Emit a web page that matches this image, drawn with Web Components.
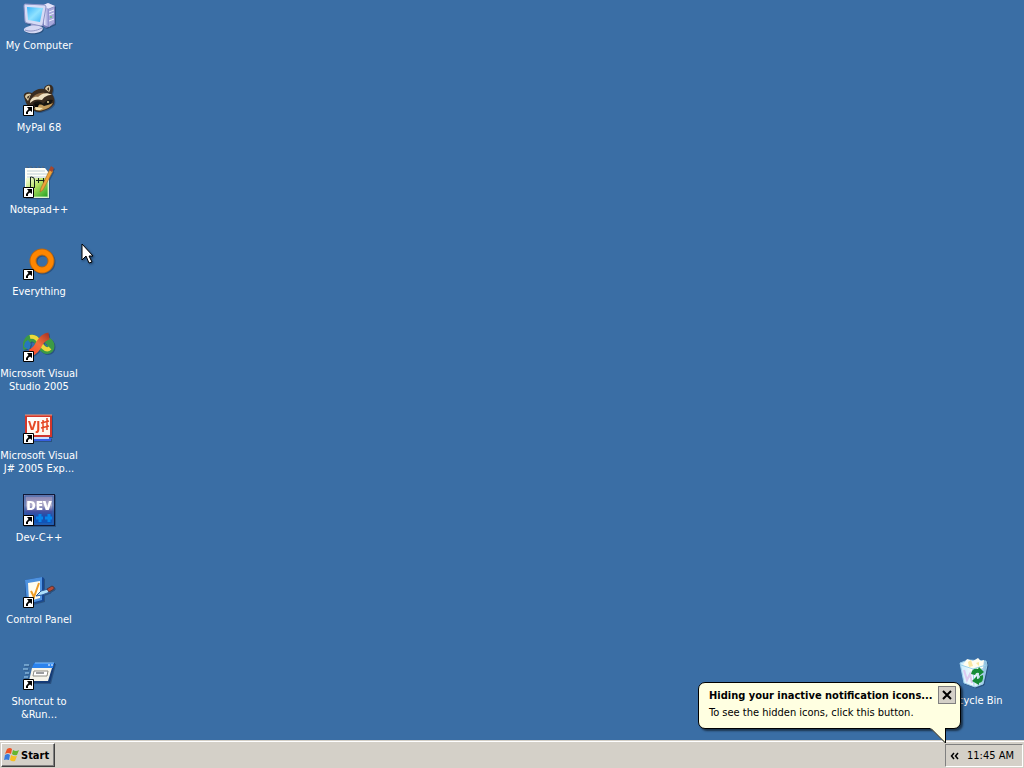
<!DOCTYPE html>
<html lang="en">
<head>
<meta charset="utf-8">
<title>Desktop</title>
<style>
html, body { height: 100%; margin: 0; }
body { font: 11px/13px "DejaVu Sans Condensed", sans-serif; overflow: hidden; background: #3a6ea5; }
</style>
</head>
<body>
<desktop-shell>
  <desktop-icon slot="left" name="computer">My Computer</desktop-icon>
  <desktop-icon slot="left" name="raccoon" shortcut>MyPal 68</desktop-icon>
  <desktop-icon slot="left" name="notepad" shortcut>Notepad++</desktop-icon>
  <desktop-icon slot="left" name="everything" shortcut>Everything</desktop-icon>
  <desktop-icon slot="left" name="studio" shortcut>Microsoft Visual Studio 2005</desktop-icon>
  <desktop-icon slot="left" name="jsharp" shortcut>Microsoft Visual J# 2005 Exp...</desktop-icon>
  <desktop-icon slot="left" name="devcpp" shortcut>Dev-C++</desktop-icon>
  <desktop-icon slot="left" name="control" shortcut>Control Panel</desktop-icon>
  <desktop-icon slot="left" name="run" shortcut>Shortcut to &amp;Run...</desktop-icon>
  <desktop-icon slot="right" name="recycle">Recycle Bin</desktop-icon>
  <mouse-pointer slot="pointer"></mouse-pointer>
  <task-bar slot="taskbar">
    <start-button>Start</start-button>
    <system-tray slot="tray">
      <time slot="clock">11:45 AM</time>
      <tray-balloon slot="balloon">
        <span slot="title">Hiding your inactive notification icons...</span>
        To see the hidden icons, click this button.
      </tray-balloon>
    </system-tray>
  </task-bar>
</desktop-shell>

<script>
const art = {
  computer: `
    <defs><linearGradient id="s" x2="1" y2="1"><stop stop-color="#38b4fa"/><stop offset=".5" stop-color="#8fe2ff"/><stop offset="1" stop-color="#3bb2f6"/></linearGradient>
    <linearGradient id="t"><stop stop-color="#e8eaff"/><stop offset="1" stop-color="#8588ca"/></linearGradient></defs>
    <path d="M18 4 25 1l7 3v18l-9 4-5-3z" fill="#767bb9"/>
    <path d="M18 4 25 1l7 3-7 3z" fill="#e4e5fa"/><path d="M21 5l5 2v18l-5-2z" fill="url(#t)"/><path d="M26 7l5-2v16l-5 4z" fill="#a6a8da"/>
    <path d="M26 10l5-2M26 13l5-2M26 19l5-2" stroke="#eef0ff"/><path d="M27 15h2" stroke="#52d24f"/>
    <path d="M8 22h8l1 5H7z" fill="#9a9fce"/><path d="M1 27c2-3 12-5 18-2 2 2 0 5-6 6S0 30 1 27" fill="#d5d8f3"/><path d="M2 28c5 2 11 1 17-2" stroke="#8f95c5" fill="none"/>
    <path d="M2 2 21 3q2 0 2 2l-3 17q0 2-2 2L4 21q-2 0-2-2L1 4q0-2 1-2" fill="#d6dbf5" stroke="#8c92c6"/>
    <path d="M4 5l16 1-3 14-12-2z" fill="url(#s)"/>`,
  raccoon: `
    <path d="M1 13c-1-3 2-6 8-4 3-3 7-5 12-4 0-3 4-5 7-4 3 2 2 6 1 9 2 3 3 6 2 10-3 4-7 6-11 7-4 2-8 1-11-2-3-2-5-4-6-6z" fill="#3a2c20"/>
    <path d="M2 13c0-3 3-4 6-3l-3 7zM22 5c1-4 5-4 5-2 1 3-1 5-1 5z" fill="#dccba4"/><path d="M4 13l3-2-2 4zM24 5l2-2v4z" fill="#35261b"/>
    <path d="M7 18C9 12 15 8 22 9c-3 2-5 4-6 6-4-1-6 1-9 3z" fill="#8c6a46"/>
    <path d="M7 19c0-4 4-7 8-6 4-4 9-5 14-2-5 0-8 2-10 5-4-1-8-1-12 3z" fill="#eee0c2"/>
    <path d="M10 20c3-4 8-3 10 0 3-4 6-5 10-4-2 4-4 7-8 8l-7 2z" fill="#171511"/>
    <path d="M13 23c2-3 5-3 8-1 4-1 7-2 9-3-2 4-6 6-10 7-3 1-6 1-9-1z" fill="#c19a5b"/>
    <path d="M12 23l8 1-3 2h-4z" fill="#f3e5b8"/><path d="M12 20l4 0-1 3h-3z" fill="#0c0b09"/><circle cx="25" cy="18" r="1" fill="#e9d49b"/>`,
  notepad: `
    <defs><linearGradient id="n" x1="0" y1="0" x2="1" y2="1"><stop stop-color="#fbffe4"/><stop offset=".45" stop-color="#b4e060"/><stop offset="1" stop-color="#1da01f"/></linearGradient></defs>
    <path d="M2 2h20l4 5v25H2z" fill="#fffff8"/><path d="M4 5h18M4 8h20M4 11h20" stroke="#bccdd4"/><path d="M3 1h18" stroke="#566678" stroke-width="1" stroke-dasharray="2 2"/>
    <path d="M3 12h22v19H3z" fill="url(#n)"/><path d="M25 7v25M2 31h23" stroke="#bfe9ac"/>
    <path d="M7.500 22V11h1q3 0 3 3v8M13 14.500h5m-2.500-2.500v5M18 14.500h5m-2.500-2.500v5" stroke="#14231a" fill="none"/>
    <path d="M27 3l3 2-10 19-3 2 1-4z" fill="#eea33c" stroke="#a96a1e" stroke-width=".6"/><path d="M26 4l2-4 3 2-2 4z" fill="#a7472d"/>`,
  everything: `<circle cx="19" cy="13" r="9" fill="none" stroke="#b86712" stroke-width="7"/><circle cx="19" cy="13" r="9" fill="none" stroke="#ff8600" stroke-width="5"/>`,
  studio: `
    <defs><linearGradient id="r" x1="0" y1="1" x2="1" y2="0"><stop stop-color="#ff4a2c"/><stop offset=".5" stop-color="#f0703c"/><stop offset="1" stop-color="#b23a25"/></linearGradient></defs>
    <path d="M4 19C2 13 5 8 9 8c4 0 6 4 9 8 4 6 10 6 10 0 0-3-2-5-5-6" fill="none" stroke="#3c9a45" stroke-width="7"/>
    <path d="M1 17q0-5 4-7l3 4-2 6z" fill="#2876bf"/>
    <path d="M7 7c4-1 7 1 9 5l4 5q4 4 7 1" fill="none" stroke="#ecd93a" stroke-width="4"/>
    <path d="M7 23q6-2 9-9 4-7 10-8" fill="none" stroke="url(#r)" stroke-width="7"/>`,
  jsharp: `
    <defs><linearGradient id="j" y2="1" x2="1"><stop stop-color="#fff"/><stop offset="1" stop-color="#fff3e8"/></linearGradient></defs>
    <path d="M3 26h25v3H10z" fill="#365fe0"/><path d="M10 25h16v2H10z" fill="#c9ddff"/>
    <path d="M2 3h27v22H2z" fill="#d1362c"/><path d="M4 5h23v18H4z" fill="url(#j)"/><path d="M2 3h27" stroke="#f09478"/>
    <text x="5" y="18" font-family="DejaVu Sans Condensed" font-size="12" font-weight="700" fill="#e54825">VJ</text><path d="M20 8v12m4-14v12m-6-7 8-2m-8 7 8-2" stroke="#e54825" stroke-width="1.500"/>`,
  devcpp: `
    <defs><linearGradient id="d" x2="0" y2="1"><stop stop-color="#817dae"/><stop offset=".35" stop-color="#aeabc9"/><stop offset=".55" stop-color="#4350a0"/><stop offset=".7" stop-color="#1b4fae"/><stop offset="1" stop-color="#0957bc"/></linearGradient></defs>
    <rect x=".5" y=".5" width="31" height="31" fill="url(#d)" stroke="#101938"/><path d="M2 2h28v28H2z" fill="none" stroke="#3264aa"/>
    <path d="M13 24h7m-3-4v8M22 24h7m-3-4v8" stroke="#0784e9" stroke-width="3"/>
    <text x="16" y="16" text-anchor="middle" font-family="Open Sans" font-size="13" font-weight="800" fill="#fff">DEV</text>`,
  control: `
    <path d="M2 4 19 1l2 1v23L6 29l-3-2z" fill="#164792"/><path d="M2 4l17-3v23L4 28z" fill="#4e92df"/><path d="M5 7l12-2v17L6 25z" fill="#fffdf1"/>
    <path d="M8 15l3 6 5-14" stroke="#ed9d28" stroke-width="2" fill="none"/>
    <path d="M13 20l5-5 7-2 2 3-8 3z" fill="#aee0fa" stroke="#2c5a9c"/><path d="M24 13l5-3q3 1 2 3l-5 3z" fill="#b74936" stroke="#51383d"/>`,
  run: `
    <path d="M1 7h5M0 11h5M2 15h4M1 19h4" stroke="#a9d8f6"/>
    <path d="M11 5h21l-5 20H6z" fill="#143b77"/><path d="M11 5h20l-1 5H9z" fill="#2b83ed"/><path d="M12 5h19" stroke="#7ec0ff"/><path d="M9 10h20l-4 13H6z" fill="#f5f4ea"/>
    <path d="M11 13h14l-1 5H10z" fill="#fff" stroke="#8c8c83"/><path d="M13 15h8" stroke="#383c40"/><path d="M25 7h2m1 0h2" stroke="#fff"/>`,
  recycle: `
    <defs><linearGradient id="b"><stop stop-color="#c8ebfd"/><stop offset=".5" stop-color="#f7fcff"/><stop offset="1" stop-color="#81b7dc"/></linearGradient></defs>
    <path d="M2 6 10 3l18 1 1 4-4 19-8 3-11-4z" fill="url(#b)" stroke="#9ed0ec"/>
    <path d="M5 8l4-6 6 2 5-3 3 3 3-1-1 8-10 3z" fill="#fffdf1"/><path d="M10 5l3-2 2 6-4 1zM18 6l3-1v4z" fill="#f9e7a2"/>
    <path d="M3 8l12 4 13-4M15 12l1 17" fill="none" stroke="#9ad4ed"/><path d="M6 13l3 10 3-6 2 9" stroke="#dcc9ef" stroke-width="2" fill="none"/>
    <path d="M13 17q1-6 7-5l1-2 5 5-5 4v-3q-3-1-4 2zM25 18q1 7-4 8v2l-7-4 5-5v3q3 0 3-3z" fill="#168b36"/>`
};

const define = (tag, html, setup) => customElements.define(tag, class extends HTMLElement {
  connectedCallback() {
    if (this.shadowRoot) return;
    this.attachShadow({ mode: 'open' }).innerHTML = html;
    if (setup) setup(this, this.shadowRoot);
  }
});

define('desktop-shell', `
  <style>
    :host { display: flex; flex-direction: column; height: 100vh; background: #3a6ea5; }
    main { flex: 1; min-height: 0; display: flex; justify-content: space-between; position: relative; }
    .left { width: 78px; }
    .right { width: 78px; display: flex; flex-direction: column; justify-content: flex-end; padding: 0 11px 3px 0; }
  </style>
  <main><div class="left"><slot name="left"></slot></div><div class="right"><slot name="right"></slot></div><slot name="pointer"></slot></main>
  <slot name="taskbar"></slot>`);

define('desktop-icon', `
  <style>
    :host { display: flex; flex-direction: column; align-items: center; gap: 5px; height: 82px; padding-top: 2px; box-sizing: border-box; color: #fff; text-align: center; }
    .pic { display: grid; width: 32px; height: 32px; flex: none; }
    svg { grid-area: 1 / 1; width: 32px; height: 32px; filter: drop-shadow(1px 1px 0 #2a5280); }
    .arrow { align-self: end; width: 11px; height: 11px; filter: none; z-index: 1; }
    span { max-width: 82px; margin: 0 -2px; }
  </style>
  <div class="pic"></div><span><slot></slot></span>`,
  (host, root) => {
    root.querySelector('.pic').innerHTML = `<svg viewBox="0 0 32 32" aria-hidden="true">${art[host.getAttribute('name')]}</svg>` +
      (host.hasAttribute('shortcut') ? '<svg class="arrow" viewBox="0 0 11 11" aria-hidden="true"><path d="M.5.5h10v10H.5z" fill="#fff" stroke="#000"/><path d="M4 2h5v5L7 5.500 5 7v2H3V7l2.500-3z" fill="#000"/></svg>' : '');
  });

define('mouse-pointer', `
  <style>:host { position: absolute; left: 81px; top: 243px; width: 14px; height: 22px; } svg { display: block; filter: drop-shadow(1px 1px 1px #1c3c60); }</style>
  <svg width="14" height="22" aria-hidden="true"><path d="M1 1v16l4-4 3 7 3-1-3-6h4z" fill="#fff" stroke="#000"/></svg>`);

define('task-bar', `
  <style>
    :host { display: flex; justify-content: space-between; align-items: stretch; height: 28px; box-sizing: border-box; padding: 2px 1px 1px 1px; background: #d4d0c8; border-top: 1px solid #d4d0c8; box-shadow: inset 0 1px #fff; }
  </style>
  <slot></slot><slot name="tray"></slot>`);

define('start-button', `
  <style>
    :host { display: flex; }
    button { display: flex; align-items: center; gap: 1px; padding: 0 2px; width: 54px; font: bold 11px/13px "DejaVu Sans Condensed", sans-serif; color: #000; background: #d4d0c8; border: 1px solid; border-color: #fff #404040 #404040 #fff; box-shadow: inset -1px -1px #808080; }
    svg { flex: none; }
  </style>
  <button type="button"><svg width="16" height="16" viewBox="0 0 16 16" aria-hidden="true">
    <path d="M3 2q3-2 5 0L7 7Q4 5 1 7z" fill="#ee5325"/><path d="M9 3q3 2 6 0l-2 5q-3 1-5-1z" fill="#65b52f"/>
    <path d="M1 8q3-2 5 0l-1 5Q2 12 0 13z" fill="#397bdc"/><path d="M7 8q3 2 6 1l-2 5q-3 1-5-1z" fill="#f7bf22"/></svg><slot></slot></button>`);

define('system-tray', `
  <style>
    :host { display: flex; align-items: center; position: relative; box-sizing: border-box; width: 78px; margin-top: 1px; padding: 0 8px 0 3px; border: 1px solid; border-color: #808080 #fff #fff #808080; justify-content: space-between; white-space: nowrap; }
    button { display: flex; border: 0; padding: 1px; background: none; }
  </style>
  <button type="button" aria-label="Show hidden icons"><svg width="10" height="9" aria-hidden="true"><path d="M4 2 1.500 5 4 8M8 2 5.500 5 8 8" fill="none" stroke="#000" stroke-width="1.500"/></svg></button>
  <slot name="clock"></slot><slot name="balloon"></slot>`);

define('tray-balloon', `
  <style>
    :host { position: absolute; right: 61px; bottom: 37px; box-sizing: border-box; width: 263px; height: 47px; padding: 3px 4px 0 10px; background: #ffffe1; color: #000; border: 1px solid #000; border-radius: 7px; box-shadow: 2px 2px 2px #0008; }
    header { display: flex; justify-content: space-between; align-items: center; height: 18px; font: bold 11px/13px "DejaVu Sans Condensed", sans-serif; white-space: nowrap; }
    p { margin: 2px 0 0; white-space: nowrap; }
    button { display: grid; place-items: center; width: 18px; height: 18px; padding: 0; background: #d4d0c8; border: 1px solid #808080; }
    .tail { position: absolute; right: 13px; top: 45px; }
  </style>
  <header><slot name="title"></slot><button type="button" aria-label="Close"><svg width="10" height="10" aria-hidden="true"><path d="M1 1l8 8M9 1 1 9" stroke="#000" stroke-width="2"/></svg></button></header>
  <p><slot></slot></p>
  <svg class="tail" width="18" height="17" aria-hidden="true"><path d="M1 0 16 15V0" fill="#ffffe1"/><path d="M2 .500 16.500 15V0" fill="none" stroke="#000"/></svg>`);
</script>
</body>
</html>
